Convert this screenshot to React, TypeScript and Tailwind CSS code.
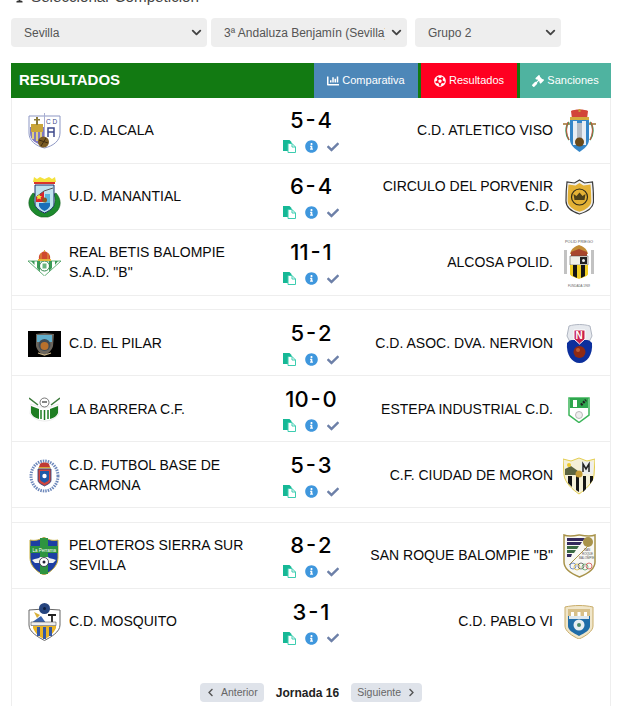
import { FaChartBar, FaCheck, FaChevronLeft, FaChevronRight, FaFutbol, FaGavel, FaInfoCircle, FaTrophy } from "react-icons/fa";
import { ChevronDown } from "lucide-react";

const arial = "font-['Liberation_Sans',Arial,sans-serif]";

const Alcala = () => (
  <svg width="33" height="36" viewBox="0 0 33 36">
    <path d="M1 3h31v17c0 8-7 13-15.500 15C8 33 1 28 1 20z" fill="#fff" stroke="#8d97c4" strokeWidth="1" />
    <path d="M2 14h14v19C8 31 2 27 2 20z" fill="#7f78c0" />
    <path d="M3 11h12v8H3z" fill="#c9a43a" />
    <path d="M8 4h2v8H8zM6 6h6v1.500H6z" fill="#8a7a3a" />
    <path d="M4 19h2v7H4zM8 19h2v9H8zM12 19h2v9h-2z" fill="#e2cf7a" />
    <path d="M16.500 0v34" stroke="#a9aed2" strokeWidth="1" />
    <text x="18" y="11" fontSize="6.500" fill="#3e4a8c" fontFamily="Liberation Sans">C D</text>
    <path d="M20 24V15h6v9M20 19h6" fill="none" stroke="#3e4a8c" strokeWidth="1.500" />
    <circle cx="15.500" cy="29" r="5.500" fill="#7a5b22" />
    <path d="M11 27l9 3M13 33l5-8" stroke="#3e2c10" strokeWidth="1" />
  </svg>
);

const Manantial = () => (
  <svg width="33" height="42" viewBox="0 0 33 42">
    <path d="M6 1l3 2 3-2 4.500 2L21 1l3 2 3-2 1 5H5z" fill="#f4e23c" />
    <path d="M6 6h21v2H6z" fill="#d9352c" />
    <path d="M5 17C-3 26 1 37 13 41h7c12-4 16-15 8-24l-2 1c3 9 0 15-9.500 19C7 33 4 27 7 18z" fill="#1d8a2e" stroke="#0d5a1a" strokeWidth=".6" />
    <path d="M7 9h19v19c0 4-5 7-9.500 9C12 35 7 32 7 28z" fill="#bfe3ee" stroke="#1a2f6a" strokeWidth="1" />
    <path d="M8 21l8-6v11H8z" fill="#d8262c" />
    <path d="M8 21l8-6 9-3" stroke="#555" strokeWidth="1" fill="none" />
    <path d="M11 18l1 2h2l-1.500 1.500.5 2-2-1-2 1 .5-2L8 20h2z" fill="#f4e23c" />
    <path d="M11 27h11v3c-1 2-3 4-5.500 5C14 34 12 32 11 30z" fill="#1a6fb8" />
    <path d="M17 27h5V18h-5z" fill="#59b7dc" />
    <circle cx="16.500" cy="24" r="2.500" fill="#8a5a20" />
  </svg>
);

const Betis = () => (
  <svg width="33" height="26" viewBox="0 0 33 26">
    <path d="M0 11h33L16.500 26z" fill="#fff" stroke="#3f9b58" strokeWidth=".8" />
    <path d="M3 11l3.500 4V11zM9 11v7l3 3.500V11zM21 11v10.500l3-3.500v-7zM27 11v4l3-4z" fill="#3a9a56" />
    <circle cx="16.500" cy="16" r="5" fill="#fff" stroke="#2c8447" strokeWidth="1" />
    <path d="M14.500 13.500h4v5h-4z" fill="#6ab57f" />
    <path d="M11 9c-1-5 3-7 5.500-8C19 2 23 4 22 9z" fill="#cf4a2e" />
    <path d="M16 0h1v2h-1z" fill="#d9b13e" />
    <path d="M10 9h13v2H10z" fill="#e3b53a" />
    <path d="M13 3v6M20 3v6" stroke="#e3b53a" strokeWidth=".8" />
  </svg>
);

const Pilar = () => (
  <svg width="33" height="26" viewBox="0 0 33 26">
    <path d="M0 0h33v26H0z" fill="#000" />
    <path d="M8 3l8.500-1L26 3l-1 12c-1 4-5 8-8.500 9C12 23 9 19 8 15z" fill="#6b655c" />
    <path d="M9 4h15v7H9z" fill="#62aecb" />
    <circle cx="16.500" cy="14" r="6" fill="#3e4a55" />
    <circle cx="16.500" cy="15" r="4" fill="#b8702c" />
    <path d="M10 22l6.500 2 6.500-2" stroke="#c9b48a" strokeWidth="1.200" fill="none" />
  </svg>
);

const Barrera = () => (
  <svg width="31" height="25" viewBox="0 0 31 25">
    <path d="M0 1l9 7M31 1l-9 7" stroke="#3d7a3c" strokeWidth="1.500" />
    <path d="M2 7l8 3 11 0 8-3 1 10c-4 5-9 7-14.500 7S5 22 1 17z" fill="#fff" stroke="#ddd" strokeWidth=".6" />
    <path d="M2 9l8 3v10C6 21 3 19 2 16zM29 9l-8 3v10c4-1 7-3 8-6z" fill="#1e7d22" />
    <circle cx="15.500" cy="5.500" r="4.500" fill="#fff" stroke="#555" strokeWidth=".8" />
    <path d="M13 5h5" stroke="#333" strokeWidth="1.200" />
    <path d="M12 13v9M15.500 13v10M19 13v9" stroke="#1e7d22" strokeWidth="1.500" />
  </svg>
);

const Carmona = () => (
  <svg width="31" height="34" viewBox="0 0 31 34">
    <ellipse cx="15.500" cy="17" rx="13.500" ry="15" fill="#fff" stroke="#6d88bb" strokeWidth="3" strokeDasharray="1.500 1" />
    <path d="M11 5c1-2 8-2 9 0l1 3H10z" fill="#c03a34" />
    <path d="M9.500 8h12v1.500h-12z" fill="#d9a63a" />
    <path d="M9 10h13v11c0 3-3 4-6.500 6C12 25 9 24 9 21z" fill="#d0463e" stroke="#1d3a7a" strokeWidth=".8" />
    <path d="M11 12h9v8c0 2-3 3-4.500 4C14 23 11 22 11 20z" fill="#1d5aa8" />
    <circle cx="15.500" cy="17" r="2.200" fill="#fff" />
  </svg>
);

const Peloteros = () => (
  <svg width="30" height="38" viewBox="0 0 30 38">
    <path d="M1 3c5 1 10 0 14-3 4 3 9 4 14 3v18c0 8-7 14-14 17C8 35 1 29 1 21z" fill="#1d3fa3" stroke="#c9b13c" strokeWidth="1" />
    <path d="M11 1h8v36h-8z" fill="#2e9440" />
    <path d="M1 9h28v7H1z" fill="#2e9440" />
    <path d="M3 23c4-2 7-1 8-3h8c1 2 4 1 8 3l-3 3h-18z" fill="#eef2f2" />
    <circle cx="15" cy="25" r="4.500" fill="#fff" stroke="#223" strokeWidth=".8" />
    <circle cx="15" cy="25" r="1.500" fill="#223" />
    <text x="3.500" y="14.500" fontSize="4.500" fill="#fff" fontFamily="Liberation Sans">La Perrama</text>
  </svg>
);

const Mosquito = () => (
  <svg width="33" height="38" viewBox="0 0 33 38">
    <path d="M1 7l15-1 16 1v15c0 7-9 12-15.500 15.500C10 34 1 29 1 22z" fill="#fff" stroke="#666" strokeWidth="1" />
    <path d="M5 23h23v2c-2 5-7 9-11.500 11C11 34 7 30 5 25z" fill="#eab424" />
    <path d="M9 24h3v9H9zM15 24h3v12h-3zM21 24h3v9h-3z" fill="#3457a5" />
    <path d="M3 20l10-7 5 7z" fill="#3a63ad" />
    <path d="M20 12h8M24 12v9" stroke="#222" strokeWidth="1.800" />
    <path d="M3 19h25v3.500H3z" fill="#eee" stroke="#555" strokeWidth=".6" />
    <circle cx="16.500" cy="5.500" r="5.500" fill="#26457f" />
    <circle cx="16.500" cy="5.500" r="1.500" fill="#0e1e3e" />
    <path d="M6 9l6 3-3 3z" fill="#d8b03a" />
  </svg>
);

const Viso = () => (
  <svg width="33" height="44" viewBox="0 0 33 44">
    <path d="M8 2c3-2 14-2 17 0l-1 8H9z" fill="#d2453a" />
    <path d="M7 8h19v3H7z" fill="#d3ab3e" />
    <path d="M15.500 0h2v3h-2z" fill="#c9a03a" />
    <path d="M0 15h33" stroke="#a2702c" strokeWidth="1.500" />
    <path d="M6 13c-4 5-4 12 0 18M27 13c4 5 4 12 0 18" stroke="#3aa060" strokeWidth="1.500" fill="none" />
    <path d="M5 13c-2 5-2 12 1 18M28 13c2 5 2 12-1 18" stroke="#d34b3a" strokeWidth="1" fill="none" />
    <path d="M7 11h19v20c0 5-5 9-9.500 12C12 40 7 36 7 31z" fill="#3586c8" />
    <path d="M10 12h4v24h-4zM19 12h4v24h-4z" fill="#e8eef4" />
    <path d="M14 14h5v16h-5z" fill="#b5bcc5" />
    <circle cx="16.500" cy="33" r="4.500" fill="#6a4a1a" />
  </svg>
);

const Circulo = () => (
  <svg width="29" height="36" viewBox="0 0 29 36">
    <path d="M14.500 1l5 3 8-1c1 8 1 14 1 19 0 7-7 11-14 13C8 33 1 29 1 22c0-5 0-11 1-19l7.500 1z" fill="#f0f0f0" stroke="#3a3a3a" strokeWidth="1.200" />
    <path d="M14.500 4l4 2.500 7-1c.6 7 .8 12 .8 16.500 0 5.500-6 9-11.800 10.800C8.700 31 2.700 27.500 2.700 22c0-4.500.2-9.500.8-16.500l7 1z" fill="#e3b135" />
    <circle cx="14.500" cy="18" r="8" fill="none" stroke="#2e2a18" strokeWidth="1.200" />
    <path d="M9.500 21l-1-6 3 2 3-3.500 3 3.500 3-2-1 6z" fill="#4c4018" />
  </svg>
);

const Alcosa = () => (
  <svg width="34" height="50" viewBox="0 0 34 50">
    <text x="3" y="5" fontSize="4" textLength="28" lengthAdjust="spacingAndGlyphs" fill="#555" fontFamily="Liberation Sans">POLID PRIEGO</text>
    <path d="M2 12h3v24H2zM29 12h3v24h-3z" fill="#c2c2c2" />
    <path d="M8 16c1-6 6-8 9-9 3 1 8 3 9 9z" fill="#c28c36" />
    <path d="M9 14l8-3 8 3v4H9z" fill="#a8462c" />
    <path d="M8 18h18v9H8z" fill="#efefe6" stroke="#444" strokeWidth=".5" />
    <path d="M18 19h7v7h-7z" fill="#222" />
    <circle cx="21.500" cy="22.500" r="1.500" fill="#eee" />
    <path d="M8 27h18v9c0 2-4 3-9 5-5-2-9-3-9-5z" fill="#f0ce23" />
    <path d="M11 27h4v13l-4-2zM19 27h4v11l-4 2z" fill="#151515" />
    <text x="6" y="48.500" fontSize="3.500" textLength="22" lengthAdjust="spacingAndGlyphs" fill="#666" fontFamily="Liberation Sans">FUNDADA 1969</text>
  </svg>
);

const Nervion = () => (
  <svg width="27" height="40" viewBox="0 0 27 40">
    <path d="M3 2c7-2 14-2 21 0l2 10-3 6H4l-3-6z" fill="#e6e9ee" stroke="#b0b6c2" strokeWidth="1" />
    <path d="M1 19c2-2 3-3 5-3h15c2 0 3 1 5 3 1 12-5 20-12.500 20S0 31 1 19z" fill="#0c2f9c" />
    <path d="M8 6h11v9l-5.500 5L8 15z" fill="#c8214e" stroke="#fff" strokeWidth="1" />
    <text x="9.500" y="15" fontSize="10" fontWeight="700" fill="#fff" fontFamily="Liberation Sans">N</text>
    <circle cx="13.500" cy="28" r="6" fill="#8e2a14" />
    <circle cx="12" cy="26" r="2" fill="#bc5a34" />
  </svg>
);

const Estepa = () => (
  <svg width="22" height="27" viewBox="0 0 22 27">
    <path d="M1 2h20v17l-10 7.500L1 19z" fill="#fff" stroke="#3cb55a" strokeWidth="1.500" />
    <path d="M2 2h18v10H2z" fill="#2fa64e" />
    <path d="M5 4h4v7H5z" fill="#fff" />
    <path d="M13 9l5-5" stroke="#222" strokeWidth="2.500" strokeDasharray="2 1" />
    <circle cx="11" cy="19" r="3.500" fill="#eee" stroke="#aaa" strokeWidth=".8" />
  </svg>
);

const Moron = () => (
  <svg width="32" height="38" viewBox="0 0 32 38">
    <path d="M0 2l8 2 8-3 8 3 8-2-1 16c-1 8-9 15-15 19C10 33 2 26 1 18z" fill="#f5f0d8" stroke="#e3cd4f" strokeWidth="1" />
    <path d="M2 12l6-3 7 5v4H2z" fill="#5c6440" />
    <circle cx="6" cy="8" r="2" fill="#eec92e" />
    <path d="M18 5h12v12H18z" fill="#eee" />
    <path d="M20 15V7l3 5 3-5v8" stroke="#222" strokeWidth="1.500" fill="none" />
    <path d="M5 19h4v11l-4-4zM13 19h3v16l-3-2zM20 19h3v13l-3 3zM27 19h3v4l-3 4z" fill="#151515" />
    <circle cx="16" cy="17" r="3.500" fill="#c49a35" />
  </svg>
);

const SanRoque = () => (
  <svg width="33" height="44" viewBox="0 0 33 44">
    <path d="M1 1c5 2 10 1 15.500 0 5 1 11 2 15.500 0v27c0 8-8 12-15.500 15C9 40 1 36 1 28z" fill="#f8f8f4" stroke="#a8934a" strokeWidth="1.500" />
    <path d="M4 4h18l-2 3H4z" fill="#35295e" />
    <path d="M4 8h15l-2 3H4z" fill="#35295e" />
    <path d="M4 12h12l-2 3H4z" fill="#3c6a44" />
    <path d="M4 16h9l-2 3H4z" fill="#3c6a44" />
    <path d="M4 20h5l-1 3H4z" fill="#35295e" />
    <path d="M6 31L25 12" stroke="#a8934a" strokeWidth="1" />
    <circle cx="25" cy="8" r="5" fill="#a8934a" />
    <text x="21" y="17" fontSize="3" fill="#555" fontFamily="Liberation Sans">SAN</text>
    <text x="19" y="21" fontSize="3" fill="#555" fontFamily="Liberation Sans">ROQUE</text>
    <text x="16" y="25" fontSize="3" fill="#555" fontFamily="Liberation Sans">BALOMPIE</text>
    <g fill="none" strokeWidth=".8">
      <circle cx="10" cy="32" r="3" stroke="#5878c0" />
      <circle cx="14" cy="33" r="3" stroke="#d8b840" />
      <circle cx="18" cy="32" r="3" stroke="#555" />
      <circle cx="22" cy="33" r="3" stroke="#5aa060" />
      <circle cx="26" cy="32" r="3" stroke="#d05050" />
    </g>
  </svg>
);

const PabloVI = () => (
  <svg width="30" height="34" viewBox="0 0 30 34">
    <path d="M1 2c9-2 19-2 28 0v19c0 5-7 10-14 13C8 31 1 26 1 21z" fill="#f0e6ca" stroke="#c9ad6a" strokeWidth="1" />
    <path d="M4 4h22v7H4z" fill="#d8c08a" />
    <path d="M7 7h3v4H7zM13.500 7h3v4h-3zM20 7h3v4h-3z" fill="#fff" />
    <path d="M4 11h22v10c0 4-5 7-11 10C9 28 4 25 4 21z" fill="#1f6ca8" />
    <path d="M5 11h20v3H5z" fill="#dfe8ee" />
    <circle cx="15" cy="20" r="5.500" fill="#e8eef2" />
    <circle cx="15" cy="20" r="2" fill="#4d8a6a" />
  </svg>
);

const DocsIcon = () => (
  <svg width="13" height="13" viewBox="0 0 13 13">
    <path d="M0 0h6.500l2 2v9H0z" fill="#16b896" />
    <path d="M5 3.500h4l3.500 3.500v5.500H5z" fill="#fff" stroke="#3ccdb0" strokeWidth="1" />
    <path d="M9 3.500V7h3.500" fill="none" stroke="#3ccdb0" strokeWidth="1" />
  </svg>
);

const matches = [
  [
    { home: "C.D. ALCALA", homeCrest: <Alcala />, score: "5 - 4", away: "C.D. ATLETICO VISO", awayCrest: <Viso /> },
    { home: "U.D. MANANTIAL", homeCrest: <Manantial />, score: "6 - 4", away: "CIRCULO DEL PORVENIR C.D.", awayCrest: <Circulo /> },
    { home: 'REAL BETIS BALOMPIE S.A.D. "B"', homeCrest: <Betis />, score: "11 - 1", away: "ALCOSA POLID.", awayCrest: <Alcosa /> },
  ],
  [
    { home: "C.D. EL PILAR", homeCrest: <Pilar />, score: "5 - 2", away: "C.D. ASOC. DVA. NERVION", awayCrest: <Nervion /> },
    { home: "LA BARRERA C.F.", homeCrest: <Barrera />, score: "10 - 0", away: "ESTEPA INDUSTRIAL C.D.", awayCrest: <Estepa /> },
    { home: "C.D. FUTBOL BASE DE CARMONA", homeCrest: <Carmona />, score: "5 - 3", away: "C.F. CIUDAD DE MORON", awayCrest: <Moron /> },
  ],
  [
    { home: "PELOTEROS SIERRA SUR SEVILLA", homeCrest: <Peloteros />, score: "8 - 2", away: 'SAN ROQUE BALOMPIE "B"', awayCrest: <SanRoque /> },
    { home: "C.D. MOSQUITO", homeCrest: <Mosquito />, score: "3 - 1", away: "C.D. PABLO VI", awayCrest: <PabloVI /> },
  ],
];

const Row = ({ m, line, low }: { m: (typeof matches)[number][number]; line: boolean; low?: boolean }) => (
  <div className={`grid h-[66px] grid-cols-[260px_1fr_260px] items-center ${line ? "border-b border-[#eeeeee]" : ""} ${low ? "pt-[2px]" : ""}`}>
    <div className="flex items-center pl-[15px]">
      <div className="flex w-[34px] shrink-0 justify-center">{m.homeCrest}</div>
      <div className="mb-[2px] ml-2 w-[190px] text-sm leading-5 text-[#0a0a0a]">{m.home}</div>
    </div>
    <div className="flex flex-col items-center">
      <div className="font-['Inter',sans-serif] text-[22px] leading-6 font-medium whitespace-nowrap text-black [word-spacing:-4px]">{m.score}</div>
      <div className="mt-2 flex items-center gap-[9px]">
        <DocsIcon />
        <FaInfoCircle className="size-[13px] text-[#3f97dd]" />
        <FaCheck className="size-3 text-[#6d80a8]" />
      </div>
    </div>
    <div className="flex items-center justify-end pr-[14px]">
      <div className="mb-[2px] w-[190px] text-right text-sm leading-5 text-[#0a0a0a]">{m.away}</div>
      <div className="ml-[9px] flex w-[34px] shrink-0 justify-center">{m.awayCrest}</div>
    </div>
  </div>
);

const Filter = ({ value, width }: { value: string; width: string }) => (
  <div className={`relative h-[29px] rounded bg-[#eeeeee] ${width}`}>
    <div className="mr-[22px] ml-[13px] overflow-hidden pt-2 text-xs leading-[15px] whitespace-nowrap text-[#555]">{value}</div>
    <ChevronDown className="absolute top-[7px] right-[3px] size-[15px] text-[#444]" strokeWidth={3} />
  </div>
);

export default function App() {
  return (
    <div className={`h-[706px] overflow-hidden bg-white pr-[10px] pl-[11px] ${arial}`}>
      <div className="-mt-[10px] flex h-[14px] items-center gap-[6px] pl-[3px] text-[15.2px] leading-[14px] text-[#444]">
        <FaTrophy className="size-[11px] text-[#333]" />
        <span>Seleccionar Competición</span>
      </div>
      <div className="mt-[14px] flex">
        <Filter value="Sevilla" width="w-[196px]" />
        <Filter value="3ª Andaluza Benjamín (Sevilla)" width="ml-1 w-[196px]" />
        <Filter value="Grupo 2" width="ml-2 w-[146px]" />
      </div>
      <div className="mt-[16px] flex h-[35px] items-center justify-between bg-[#127a12]">
        <div className="pb-[1px] pl-2 text-[15px] font-bold text-white">RESULTADOS</div>
        <div className="flex h-full gap-[3px] text-[11px] text-white">
          <div className="flex w-[104px] items-center justify-center gap-[3px] bg-[#4d87b8]">
            <FaChartBar className="size-3" />
            Comparativa
          </div>
          <div className="flex w-[96px] items-center justify-center gap-[3px] bg-[#ff0021]">
            <FaFutbol className="size-3" />
            Resultados
          </div>
          <div className="flex w-[91px] items-center justify-center gap-[3px] bg-[#4fb3a0]">
            <FaGavel className="size-3" />
            Sanciones
          </div>
        </div>
      </div>
      <div className="h-[700px] border-x border-[#eeeeee]">
        <div className="mb-[13px]">
          {matches[0].map((m) => (
            <Row key={m.home} m={m} line />
          ))}
        </div>
        <div className="mb-[14px] border-t border-[#eeeeee]">
          {matches[1].map((m) => (
            <Row key={m.home} m={m} line low />
          ))}
        </div>
        <div className="border-t border-[#eeeeee]">
          {matches[2].map((m, i) => (
            <Row key={m.home} m={m} line={i === 0} />
          ))}
        </div>
        <div className="mt-[28px] flex items-center justify-center gap-3 text-[10.5px]">
          <div className="flex h-[19px] w-16 items-center justify-center gap-[6px] rounded-sm bg-[#dfe3ea] text-[#666]">
            <FaChevronLeft className="size-[9px] text-[#555]" />
            Anterior
          </div>
          <div className="text-xs font-bold text-[#222]">Jornada 16</div>
          <div className="flex h-[19px] w-[71px] items-center justify-center gap-[6px] rounded-sm bg-[#dfe3ea] text-[#666]">
            Siguiente
            <FaChevronRight className="size-[9px] text-[#555]" />
          </div>
        </div>
      </div>
    </div>
  );
}
